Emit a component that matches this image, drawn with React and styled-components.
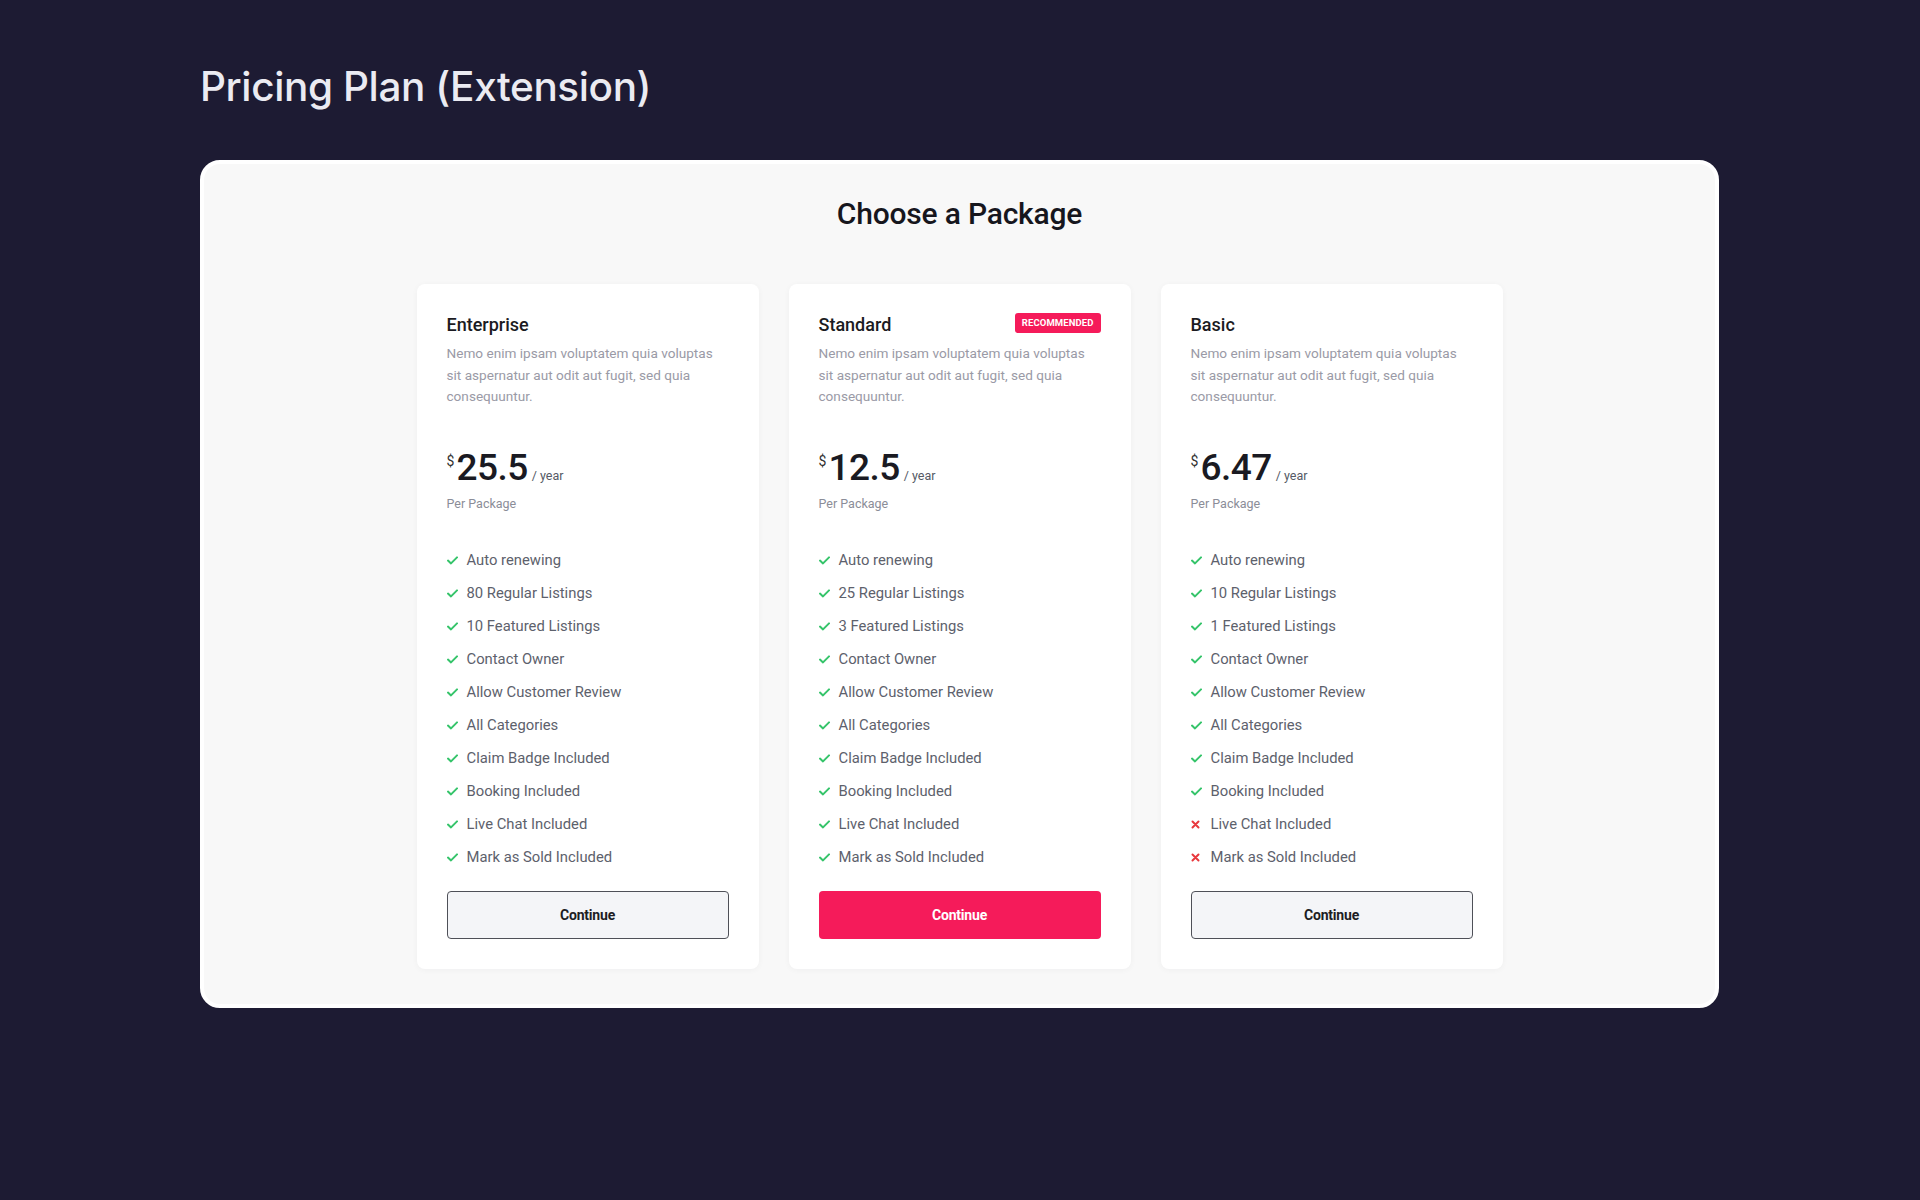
import React from 'react'
import styled, { createGlobalStyle } from 'styled-components'

const GlobalStyle = createGlobalStyle`
  html, body {
    margin: 0;
    padding: 0;
    background: #1d1b33;
  }
  body {
    font-family: Roboto, "Liberation Sans", sans-serif;
  }
`

const Page = styled.div`
  min-height: 1200px;
  padding: 59px 201px 0 200px;
  box-sizing: border-box;
`

const PageTitle = styled.h1`
  margin: 0 0 45px;
  font-family: Inter, "Noto Sans", sans-serif;
  font-weight: 500;
  font-size: 40.5px;
  line-height: 56px;
  letter-spacing: -0.4px;
  color: #ebebf2;
`

const Panel = styled.section`
  background: #f8f8f8;
  border: 4px solid #ffffff;
  border-radius: 20px;
  padding: 32px 0 35px;
  box-sizing: border-box;
`

const Heading = styled.h2`
  margin: 0 0 52px;
  text-align: center;
  font-weight: 500;
  font-size: 30px;
  line-height: 36px;
  color: #16161d;
  letter-spacing: -0.2px;
`

const Cards = styled.div`
  display: grid;
  grid-template-columns: repeat(3, 342px);
  gap: 30px;
  justify-content: center;
`

const Card = styled.div`
  background: #ffffff;
  border-radius: 8px;
  box-shadow: 0 1px 6px rgba(20, 20, 40, 0.04);
  padding: 29px 30px 30px;
  display: flex;
  flex-direction: column;
`

const CardHead = styled.div`
  display: flex;
  align-items: center;
  justify-content: space-between;
`

const PlanName = styled.h3`
  margin: 0;
  font-size: 18px;
  font-weight: 500;
  line-height: 24px;
  color: #1b1b22;
`

const Badge = styled.span`
  background: #f51b5a;
  color: #fff;
  font-size: 9.5px;
  font-weight: 700;
  text-transform: uppercase;
  letter-spacing: 0.1px;
  border-radius: 3px;
  padding: 0 7px;
  height: 20px;
  line-height: 20px;
  margin-top: -5px;
`

const Description = styled.p`
  margin: 6px 0 0;
  font-size: 13.6px;
  line-height: 21.5px;
  color: #9a9aa6;
`

const PriceRow = styled.div`
  margin-top: 38px;
  display: flex;
  align-items: baseline;
  height: 44px;
  line-height: 44px;
  color: #1a1a22;
`

const Currency = styled.span`
  font-size: 14px;
  align-self: flex-start;
  line-height: 14px;
  margin-top: 8px;
  margin-right: 2px;
  color: #333;
`

const Amount = styled.span`
  font-size: 37px;
  font-weight: 500;
  letter-spacing: -0.5px;
`

const Period = styled.span`
  font-size: 12.5px;
  color: #555a66;
  margin-left: 4px;
`

const PerPackage = styled.div`
  margin-top: 5px;
  font-size: 12.5px;
  line-height: 18px;
  color: #8b8d98;
`

const Features = styled.ul`
  list-style: none;
  margin: 31px 0 0;
  padding: 0;
`

const Feature = styled.li`
  display: flex;
  align-items: center;
  height: 33px;
  font-size: 14.8px;
  color: #5d616c;
`

const IconBox = styled.span`
  width: 12px;
  margin-right: 8px;
  display: flex;
  align-items: center;
`

const Button = styled.button`
  margin-top: 17px;
  height: 48px;
  width: 100%;
  border-radius: 4px;
  font-family: Roboto, "Liberation Sans", sans-serif;
  font-size: 14px;
  font-weight: 700;
  letter-spacing: -0.2px;
  cursor: pointer;
  border: ${p => (p.primary ? 'none' : '1px solid #4e5058')};
  background: ${p => (p.primary ? '#f51b5a' : '#f4f5f8')};
  color: ${p => (p.primary ? '#ffffff' : '#1d1d24')};
`

const Check = () => (
  <svg width="11" height="9" viewBox="0 0 11 9">
    <polyline points="1,4.6 4,7.4 10,1.4" fill="none" stroke="#35c46a" strokeWidth="2" strokeLinecap="round" strokeLinejoin="round" />
  </svg>
)

const Cross = () => (
  <svg width="9" height="9" viewBox="0 0 9 9">
    <path d="M1.5 1.5 L7.5 7.5 M7.5 1.5 L1.5 7.5" stroke="#e8383d" strokeWidth="2" strokeLinecap="round" />
  </svg>
)

const desc = 'Nemo enim ipsam voluptatem quia voluptas sit aspernatur aut odit aut fugit, sed quia consequuntur.'

const plans = [
  { name: 'Enterprise', price: '25.5', regular: 80, featured: 10, off: [] },
  { name: 'Standard', price: '12.5', regular: 25, featured: 3, off: [], recommended: true },
  { name: 'Basic', price: '6.47', regular: 10, featured: 1, off: ['Live Chat Included', 'Mark as Sold Included'] },
]

const featureList = plan => [
  'Auto renewing',
  `${plan.regular} Regular Listings`,
  `${plan.featured} Featured Listings`,
  'Contact Owner',
  'Allow Customer Review',
  'All Categories',
  'Claim Badge Included',
  'Booking Included',
  'Live Chat Included',
  'Mark as Sold Included',
]

const PlanCard = ({ plan }) => (
  <Card>
    <CardHead>
      <PlanName>{plan.name}</PlanName>
      {plan.recommended && <Badge>Recommended</Badge>}
    </CardHead>
    <Description>{desc}</Description>
    <PriceRow>
      <Currency>$</Currency>
      <Amount>{plan.price}</Amount>
      <Period>/ year</Period>
    </PriceRow>
    <PerPackage>Per Package</PerPackage>
    <Features>
      {featureList(plan).map(f => (
        <Feature key={f}>
          <IconBox>{plan.off.includes(f) ? <Cross /> : <Check />}</IconBox>
          {f}
        </Feature>
      ))}
    </Features>
    <Button primary={plan.recommended}>Continue</Button>
  </Card>
)

const App = () => (
  <>
    <GlobalStyle />
    <Page>
      <PageTitle>Pricing Plan (Extension)</PageTitle>
      <Panel>
        <Heading>Choose a Package</Heading>
        <Cards>
          {plans.map(p => (
            <PlanCard key={p.name} plan={p} />
          ))}
        </Cards>
      </Panel>
    </Page>
  </>
)

export default App
